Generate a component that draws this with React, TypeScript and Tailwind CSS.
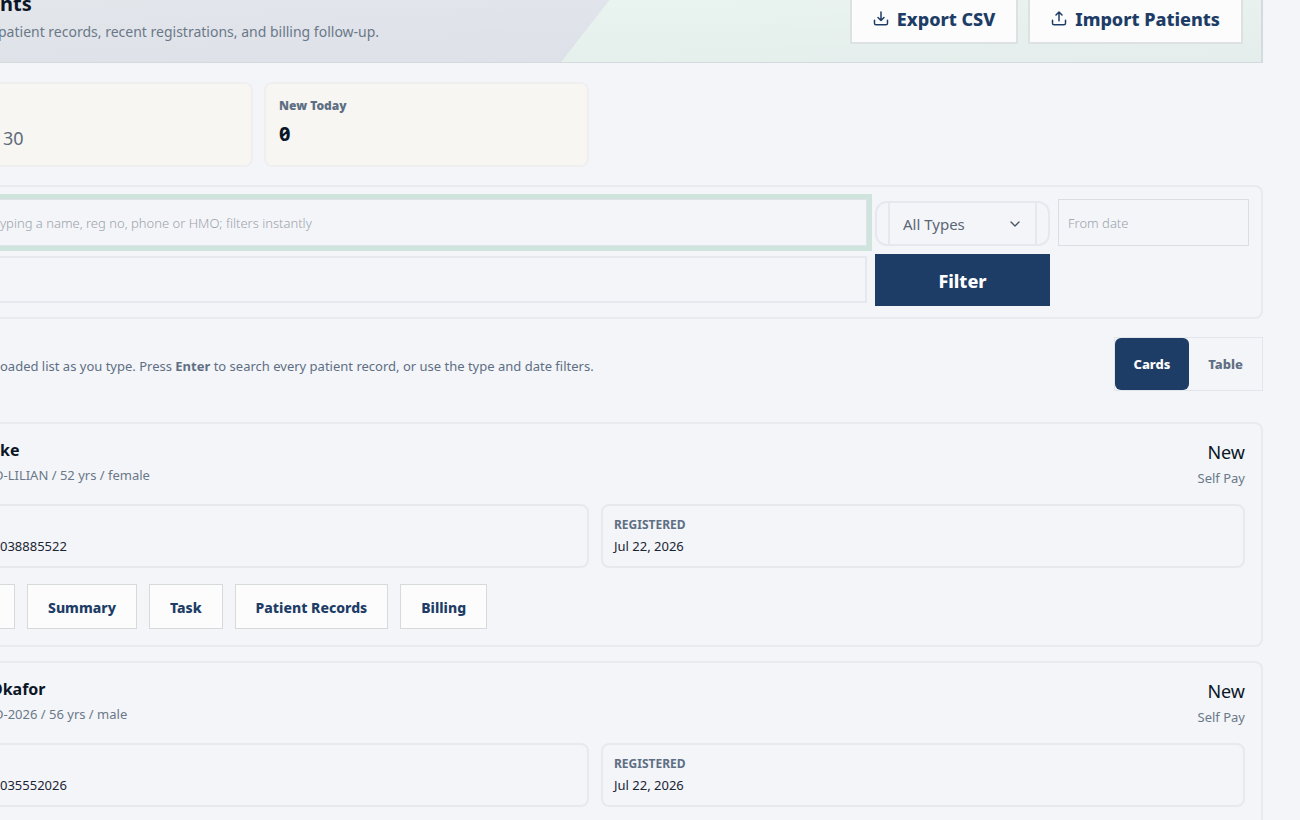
import type { ReactNode } from "react";
import { ChevronDown } from "lucide-react";

type Patient = {
  name: string;
  nameClipped: boolean;
  details: string;
  phone: string;
  registered: string;
};

const patients: Patient[] = [
  { name: "ke", nameClipped: false, details: "D-LILIAN / 52 yrs / female", phone: "038885522", registered: "Jul 22, 2026" },
  { name: "Okafor", nameClipped: true, details: "D-2026 / 56 yrs / male", phone: "035552026", registered: "Jul 22, 2026" },
];

const actions = ["Summary", "Task", "Patient Records", "Billing"];

function TrayIcon({ up }: { up?: boolean }) {
  return (
    <svg width="16" height="16" viewBox="0 0 16 16" fill="none" stroke="currentColor" strokeWidth="1.5" strokeLinecap="round" strokeLinejoin="round" aria-hidden="true">
      <path d="M1.5 9.200v3a1.600 1.600 0 0 0 1.600 1.600h9.800a1.600 1.600 0 0 0 1.600-1.600v-3" />
      {up ? <path d="M8 9.800V1.200M5 4 8 1l3 3" /> : <path d="M8 1v8.400M5 6.500l3 3 3-3" />}
    </svg>
  );
}

function HeaderButton({ icon, children }: { icon: ReactNode; children: ReactNode }) {
  return (
    <button type="button" className="flex h-[50px] items-center gap-2 border-2 border-[#dde1e1] bg-[#fcfcfd] px-[21px] text-lg font-extrabold text-[#1e3d66]">
      {icon}
      {children}
    </button>
  );
}

function PatientCard({ patient }: { patient: Patient }) {
  return (
    <article className="rounded-r-lg border-2 border-l-0 border-[#e8eaee] pt-2.5 pr-4 pb-4">
      <div className="flex h-[70px] justify-between">
        <div>
          <h2 className={patient.nameClipped ? "-ml-2.5 pt-1 text-base leading-6 font-bold text-[#0b1526]" : "pt-1 text-base leading-6 font-bold text-[#0b1526]"}>{patient.name}</h2>
          <p className="-ml-1.5 pt-px text-[13px] leading-6 text-[#6b7888]">{patient.details}</p>
        </div>
        <div className="pt-1 text-right">
          <p className="text-lg leading-7 text-[#0b1526]">New</p>
          <p className="text-[13px] leading-6 text-[#6b7888]">Self Pay</p>
        </div>
      </div>
      <dl className="grid grid-cols-[589fr_644fr] gap-3 text-[13px]">
        <div className="h-16 rounded-r-lg border-2 border-l-0 border-[#e7e9ed] pt-[30px]">
          <dd className="leading-5 text-[#1a2433]">{patient.phone}</dd>
        </div>
        <div className="h-16 rounded-lg border-2 border-[#e7e9ed] px-[11px] pt-2">
          <dt className="text-xs leading-[22px] font-bold text-[#5f6f83]">REGISTERED</dt>
          <dd className="leading-5 text-[#1a2433]">{patient.registered}</dd>
        </div>
      </dl>
      <div className="mt-4 flex gap-3">
        <span className="h-[45px] w-[15px] border border-l-0 border-[#d6dadb] bg-[#fcfcfd]" />
        {actions.map((label) => (
          <button key={label} type="button" className="h-[45px] border border-[#d6dadb] bg-[#fcfcfd] px-5 pt-0.5 text-sm font-extrabold text-[#1e3d66]">
            {label}
          </button>
        ))}
      </div>
    </article>
  );
}

export default function App() {
  return (
    <div className="h-screen overflow-hidden bg-[#f3f5f9] font-['Noto_Sans','Open_Sans',sans-serif]">
      <main className="pr-[37px]">
        <header className="flex h-[63px] items-start justify-between border-r-2 border-b border-[#d4dbdf] bg-[linear-gradient(180deg,rgba(30,60,100,0)_0%,rgba(30,60,100,0.02)_100%),linear-gradient(128deg,#e3e6eb_0%,#e1e4eb_46.5%,#e9f3ef_46.6%,#e8f1ee_100%)]">
          <div>
            <h1 className="-mt-3 text-xl leading-8 font-bold text-[#0b1526]">nts</h1>
            <p className="-ml-0.5 text-sm leading-6 text-[#6b7888]">patient records, recent registrations, and billing follow-up.</p>
          </div>
          <div className="-mt-1.5 flex gap-2.5 pr-[18px]">
            <HeaderButton icon={<TrayIcon />}>Export CSV</HeaderButton>
            <HeaderButton icon={<TrayIcon up />}>Import Patients</HeaderButton>
          </div>
        </header>

        <section className="mt-[19px] flex gap-[11px]">
          <div className="h-[85px] w-[253px] rounded-r-lg border-2 border-l-0 border-[#efeff0] bg-[#f7f6f3] pt-10 pl-[3px]">
            <p className="text-lg leading-7 text-[#5f6b7a]">30</p>
          </div>
          <div className="h-[85px] w-[325px] rounded-lg border-2 border-[#efeff0] bg-[#f7f6f3] px-[13px] pt-3">
            <p className="text-xs leading-5 font-black text-[#5f6f83]">New Today</p>
            <p className="pt-1 text-xl leading-7 font-bold text-[#0b1526] slashed-zero">0</p>
          </div>
        </section>

        <form className="mt-[18px] grid h-[134px] grid-cols-[1fr_175px_191px] content-start gap-x-2 gap-y-2 rounded-r-lg border-2 border-l-0 border-[#e8eaee] pt-3 pr-3" onSubmit={(e) => e.preventDefault()}>
          <input type="text" aria-label="Search patients" placeholder="yping a name, reg no, phone or HMO; filters instantly" className="h-[47px] border border-l-0 border-[#dfe3e8] text-[13px] font-light outline-none ring-5 ring-[#cfe4dc] placeholder:text-[#9da3ab]" />
          <div className="mt-0.5 flex h-[45px] rounded-xl border-2 border-[#e6e8ed] px-[11px]">
            <div className="relative w-full border-x-2 border-[#e6e8ed]">
              <select aria-label="Patient type" className="h-full w-full appearance-none bg-transparent pt-0.5 pl-[13px] text-[15px] text-[#5a6675] outline-none">
                <option>All Types</option>
              </select>
              <ChevronDown size={16} className="pointer-events-none absolute top-[13px] right-3 text-[#4a5564]" />
            </div>
          </div>
          <input type="text" aria-label="From date" placeholder="From date" className="h-[47px] border border-[#dadee3] px-[9px] text-[13px] font-light outline-none placeholder:text-[#9da3ab]" />
          <input type="text" aria-label="To date" className="mt-0.5 h-[47px] border-2 border-l-0 border-[#e6e8ed] outline-none" />
          <button type="submit" className="h-[52px] bg-[#1e3d66] pt-0.5 text-lg font-extrabold text-white">Filter</button>
        </form>

        <div className="mt-[18px] flex items-center justify-between">
          <p className="pt-1 text-[13px] leading-6 text-[#5f6f83]">
            oaded list as you type. Press <strong className="font-bold">Enter</strong> to search every patient record, or use the type and date filters.
          </p>
          <div className="flex h-[54px] border border-[#e2e5ea] text-[13px] font-extrabold">
            <button type="button" aria-pressed="true" className="w-[74px] rounded-md bg-[#1e3d66] pt-0.5 text-white">Cards</button>
            <button type="button" aria-pressed="false" className="w-[73px] pt-0.5 text-[#5f6f83]">Table</button>
          </div>
        </div>

        <section className="mt-[31px] flex flex-col gap-3.5">
          {patients.map((patient) => (
            <PatientCard key={patient.phone} patient={patient} />
          ))}
        </section>
      </main>
    </div>
  );
}
